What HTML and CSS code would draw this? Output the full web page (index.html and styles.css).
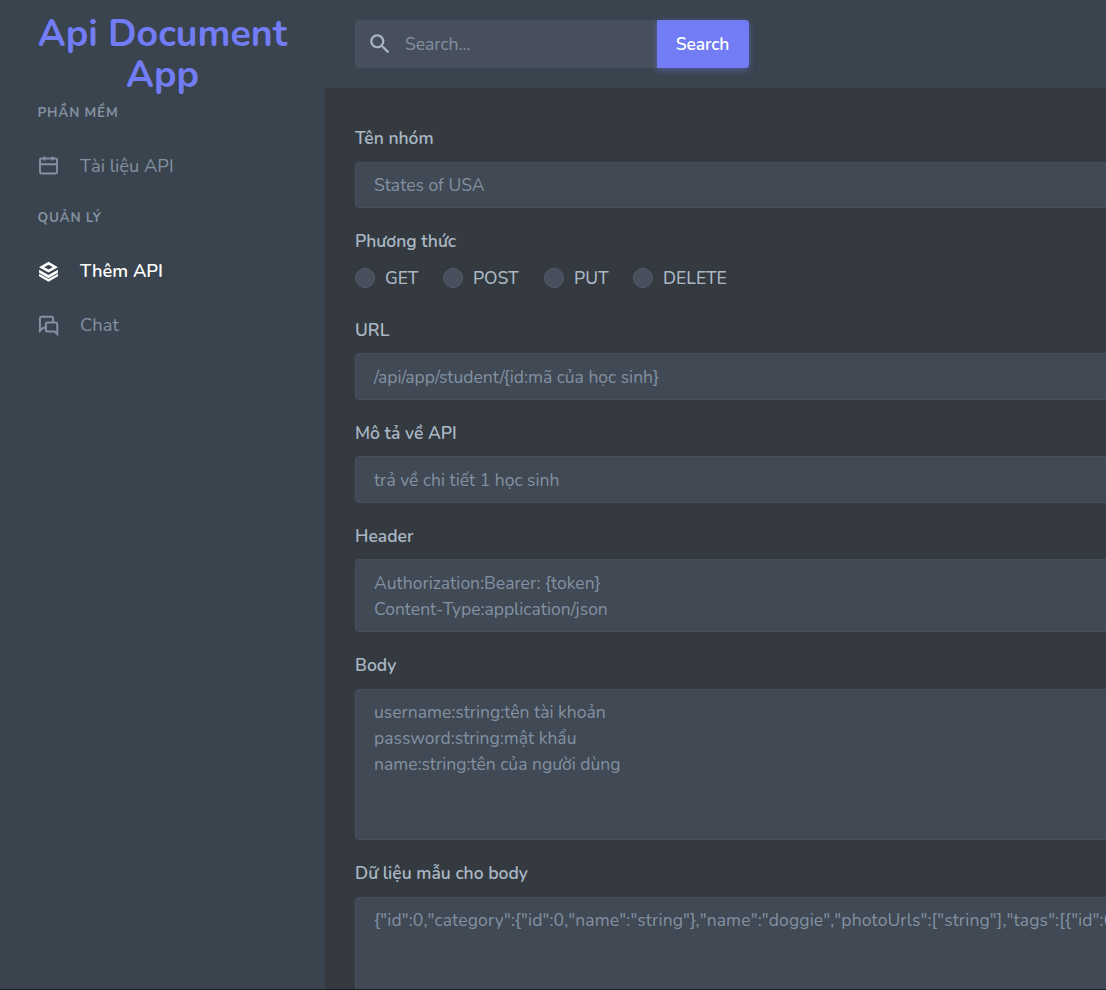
FILE: index.html
```html
<!DOCTYPE html>
<html lang="vi">
<head>
<meta charset="utf-8">
<title>Api Document App</title>
<link rel="stylesheet" href="styles.css">
</head>
<body>
<div class="app">
  <aside class="sidebar">
    <h1 class="brand">Api Document<br>App</h1>
    <div class="nav-title nav-title-first">PHẦN MỀM</div>
    <a class="nav-item">
      <svg class="nav-icon" viewBox="0 0 21 21" fill="none" stroke="currentColor" stroke-width="1.9"><path d="M3.5 2.5h14q1.5 0 1.5 1.5v12q0 1.5-1.5 1.5h-14Q2 17.5 2 16V4q0-1.5 1.5-1.5zM2 8.2h17M6.5.5v4M14.5.5v4"/></svg>
      <span>Tài liệu API</span>
    </a>
    <div class="nav-title nav-title-second">QUẢN LÝ</div>
    <a class="nav-item active">
      <svg class="nav-icon" viewBox="0 0 24 24" fill="currentColor"><path fill-rule="evenodd" d="M12 .8 1.2 7 12 13.2 22.8 7zM12 4.2 16.9 7 12 9.8 7.1 7z"/><path d="M1.2 9.9 12 16.1l10.8-6.2v3.6L12 19.7 1.2 13.5zM1.2 14.5 12 20.7l10.8-6.2v3L12 23.7 1.2 17.5z"/></svg>
      <span>Thêm API</span>
    </a>
    <a class="nav-item">
      <svg class="nav-icon" viewBox="0 0 24 24" fill="none" stroke="currentColor" stroke-width="2.3"><path d="M8 14.5H6L2.2 18V4q0-2 2-2h11q2 0 2 2v4"/><path d="M11 8.5h9q2 0 2 2v11.3l-3-3h-8q-2 0-2-2v-6.3q0-2 2-2z"/></svg>
      <span>Chat</span>
    </a>
  </aside>
  <div class="content">
    <header class="topbar">
      <div class="search">
        <svg class="search-icon" viewBox="0 0 24 24" fill="currentColor"><path d="M9.5 3A6.5 6.5 0 0 1 16 9.5c0 1.61-.59 3.09-1.56 4.23l.27.27h.79l5 5-1.5 1.5-5-5v-.79l-.27-.27A6.516 6.516 0 0 1 9.5 16a6.5 6.5 0 0 1 0-13m0 2C7 5 5 7 5 9.5S7 14 9.5 14 14 12 14 9.5 12 5 9.5 5z"/></svg>
        <span class="search-text">Search...</span>
      </div>
      <button class="search-button">Search</button>
    </header>
    <main class="form">
      <section class="field">
        <div class="label label-first">Tên nhóm</div>
        <div class="input input-first">States of USA</div>
      </section>
      <section class="field methods-field">
        <div class="label">Phương thức</div>
        <div class="methods">
          <div class="method m-get"><i class="radio"></i><span>GET</span></div>
          <div class="method m-post"><i class="radio"></i><span>POST</span></div>
          <div class="method m-put"><i class="radio"></i><span>PUT</span></div>
          <div class="method m-delete"><i class="radio"></i><span>DELETE</span></div>
        </div>
      </section>
      <section class="field">
        <div class="label">URL</div>
        <div class="input">/api/app/student/{id:mã của học sinh}</div>
      </section>
      <section class="field">
        <div class="label">Mô tả về API</div>
        <div class="input">trả về chi tiết 1 học sinh</div>
      </section>
      <section class="field">
        <div class="label">Header</div>
        <div class="input area area-header"><span>Authorization:Bearer: {token}</span><span>Content-Type:application/json</span></div>
      </section>
      <section class="field">
        <div class="label label-area">Body</div>
        <div class="input area area-body"><span>username:string:tên tài khoản</span><span>password:string:mật khẩu</span><span>name:string:tên của người dùng</span></div>
      </section>
      <section class="field">
        <div class="label label-area">Dữ liệu mẫu cho body</div>
        <div class="input area area-sample"><span class="json">{"id":0,"category":{"id":0,"name":"string"},"name":"doggie","photoUrls":["string"],"tags":[{"id":0</span></div>
      </section>
    </main>
  </div>
</div>
</body>
</html>
```
FILE: styles.css
```css
* { box-sizing: border-box; }
body {
  margin: 0;
  background: #343a40;
  color: #aab8c5;
  font: 17.5px/26px Nunito, Lato, "Noto Sans", sans-serif;
}
.app { display: flex; height: 990px; overflow: hidden; border-bottom: 1px solid #1b1c24; }
.sidebar { flex: 0 0 325px; background: #3a444e; color: #8391a2; }
.brand {
  margin: 0;
  padding-top: 13px;
  color: #727cf5;
  font-size: 37.5px;
  line-height: 41px;
  font-weight: 700;
  text-align: center;
}
.nav-title {
  padding-left: 37.5px;
  height: 20px;
  line-height: 20px;
  font-size: 13.5px;
  font-weight: 700;
  letter-spacing: .8px;
}
.nav-title-first { margin-top: 8px; margin-bottom: 16px; }
.nav-title-second { margin-top: 15px; margin-bottom: 16px; }
.nav-item {
  display: flex;
  align-items: center;
  height: 54px;
  padding-left: 38px;
  font-size: 18.3px;
}
.nav-icon { width: 21px; height: 21px; margin-right: 21px; }
.active { color: #fff; font-weight: 600; }
.content { flex: 1; min-width: 0; }
.topbar { display: flex; height: 88px; padding: 20px 0 0 30px; background: #3a444e; }
.search {
  display: flex;
  align-items: center;
  width: 302px;
  height: 48px;
  padding-left: 12px;
  border-radius: 4px 0 0 4px;
  background: #464f5b;
}
.search-icon { width: 26px; height: 26px; margin-right: 12px; }
.search-text { color: #8391a2; }
.search-button {
  width: 92px;
  height: 48px;
  padding: 0 1px 0 0;
  border: 0;
  border-radius: 0 4px 4px 0;
  background: #727cf5;
  color: #fff;
  font: inherit;
  font-weight: 600;
  letter-spacing: -.15px;
  box-shadow: 0 2px 7px rgba(114, 124, 245, .5);
}
.form { padding: 37px 0 0 30px; }
.field { margin-bottom: 20px; }
.label { height: 26px; margin-bottom: 10px; font-weight: 600; white-space: nowrap; }
.label-first, .label-area { margin-bottom: 11px; }
.input {
  height: 47px;
  width: 900px;
  padding: 10px 18px 9px;
  border: 1px solid #464f5b;
  border-radius: 4px;
  background: #404954;
  color: #8391a2;
  white-space: nowrap;
}
.input-first { height: 46px; padding-top: 9px; }
.area { display: flex; flex-direction: column; align-items: flex-start; }
.area-header { height: 73px; }
.area-body, .area-sample { height: 151px; padding-top: 9px; }
.json { letter-spacing: .12px; }
.methods-field { margin-bottom: 26px; }
.methods { display: flex; height: 27px; }
.method { display: flex; align-items: center; gap: 10px; font-weight: 500; }
.m-get { width: 88px; }
.m-post { width: 101px; }
.m-put { width: 89px; }
.radio { width: 20px; height: 20px; border: 1px solid #525d6b; border-radius: 50%; background: #464f5b; }
```
